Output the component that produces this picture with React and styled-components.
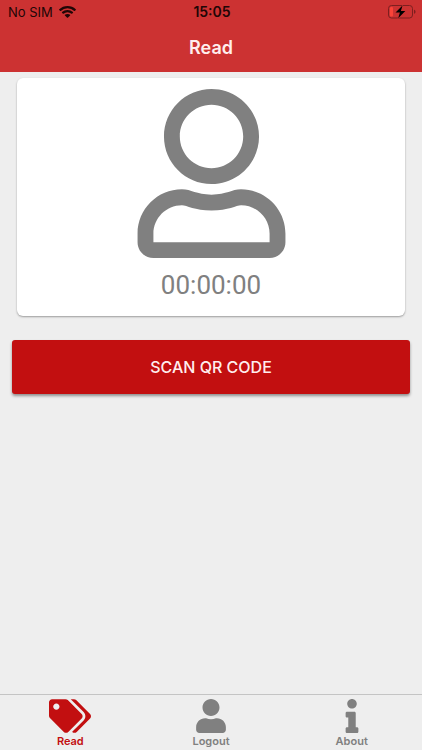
import React, { useState } from 'react';
import styled, { createGlobalStyle } from 'styled-components';
import { FaRegUser, FaTags, FaUser, FaInfo } from 'react-icons/fa';

const GlobalStyle = createGlobalStyle`
    * {
        box-sizing: border-box;
    }

    body {
        margin: 0;
        background: #eeeeee;
        font-family: Inter, Roboto, sans-serif;
    }
`;

const Screen = styled.div`
    min-height: 100vh;
    display: flex;
    flex-direction: column;
`;

const Header = styled.header`
    background: #cc3232;
`;

const StatusBar = styled.div`
    height: 24px;
    padding: 0 6px 0 8px;
    display: grid;
    grid-template-columns: 1fr auto 1fr;
    align-items: center;
    font-size: 13px;
    line-height: 24px;
    color: #210606;
`;

const Carrier = styled.div`
    display: flex;
    align-items: center;
    gap: 6px;
`;

const Time = styled.span`
    font-size: 14px;
    font-weight: 600;
`;

const BatteryIcon = styled.svg`
    justify-self: end;
`;

const Title = styled.h1`
    margin: 0;
    height: 48px;
    font-size: 18px;
    line-height: 48px;
    font-weight: 600;
    text-align: center;
    color: #ffeeee;
`;

const Content = styled.main`
    flex: 1;
    padding: 6px 12px;
    display: flex;
    flex-direction: column;
    gap: 24px;
`;

const Card = styled.section`
    margin: 0 5px;
    padding: 11px 0 16px;
    display: flex;
    flex-direction: column;
    align-items: center;
    gap: 12px;
    background: #ffffff;
    border-radius: 6px;
    box-shadow: 0 1px 2px rgba(0, 0, 0, 0.35);
    color: #808080;
`;

const Avatar = styled(FaRegUser)`
    width: auto;
    height: 169px;
`;

const Timer = styled.time`
    font-family: Roboto, sans-serif;
    font-size: 26px;
    line-height: 30px;
`;

const ScanButton = styled.button`
    height: 54px;
    border: 0;
    border-radius: 3px;
    background: #c20f10;
    box-shadow: 0 2px 3px rgba(0, 0, 0, 0.4);
    color: #ffeeee;
    font-family: inherit;
    font-size: 16px;
    font-weight: 500;
    text-transform: uppercase;
    cursor: pointer;
`;

const TabBar = styled.nav`
    height: 56px;
    display: flex;
    border-top: 1px solid #c4c4c4;
`;

const Tab = styled.a`
    flex: 1;
    padding-top: 4px;
    display: flex;
    flex-direction: column;
    align-items: center;
    gap: 1px;
    font-size: 11px;
    line-height: 14px;
    font-weight: 600;
    color: ${props => (props.$active ? '#c20f10' : '#808080')};
    text-decoration: none;

    svg {
        width: 42px;
        height: 34px;
    }
`;

const tabs = [
  { name: 'Read', icon: FaTags },
  { name: 'Logout', icon: FaUser },
  { name: 'About', icon: FaInfo }
];

const Wifi = () => (
  <svg width="17" height="12" viewBox="0 0 17 12" fill="currentColor" aria-hidden="true">
    <path d="M8.5 0C5.3 0 2.4 1.2.2 3.3c-.2.2-.2.4 0 .6l1 1c.2.2.4.2.6 0a9.8 9.8 0 0 1 13.4 0c.2.2.4.2.6 0l1-1c.2-.2.2-.4 0-.6A12 12 0 0 0 8.5 0Z" />
    <path d="M8.5 4c-2.1 0-4 .8-5.5 2.1-.2.2-.2.4 0 .6l1 1c.2.2.4.2.6 0a5.8 5.8 0 0 1 7.8 0c.2.2.4.2.6 0l1-1c.2-.2.2-.4 0-.6A8.2 8.2 0 0 0 8.5 4Z" />
    <path d="M8.5 7.9c-1 0-1.9.3-2.6.9-.2.2-.2.4 0 .6l2.300 2.300c.2.2.4.2.6 0l2.300-2.300c.2-.2.2-.4 0-.6a4 4 0 0 0-2.600-.9Z" />
  </svg>
);

const Battery = () => (
  <BatteryIcon width="28" height="14" viewBox="0 0 28 14" aria-hidden="true">
    <rect x="0.5" y="0.5" width="24" height="12.5" rx="3" fill="none" stroke="#7d1f1f" />
    <rect x="2" y="2" width="3" height="9.5" rx="1" fill="#fa4338" />
    <path d="M26 4.8c1 .4 1.5 1.1 1.5 2s-.5 1.6-1.5 2Z" fill="#7d1f1f" />
    <path d="M14.5.5 7.5 7.6h4.4L10.2 13.3 17.3 6h-4.4Z" fill="#000" stroke="#cc3232" strokeWidth="1" paintOrder="stroke" />
  </BatteryIcon>
);

const App = () => {
  const [active, setActive] = useState('Read');

  const selectTab = (e, name) => {
    e.preventDefault();
    setActive(name);
  };

  return (
    <Screen>
      <GlobalStyle />
      <Header>
        <StatusBar>
          <Carrier>No SIM <Wifi /></Carrier>
          <Time>15:05</Time>
          <Battery />
        </StatusBar>
        <Title>Read</Title>
      </Header>
      <Content>
        <Card>
          <Avatar aria-hidden="true" />
          <Timer>00:00:00</Timer>
        </Card>
        <ScanButton type="button">Scan QR Code</ScanButton>
      </Content>
      <TabBar>
        {tabs.map(({ name, icon: Icon }) => (
          <Tab
            key={name}
            href={`#${name.toLowerCase()}`}
            $active={active === name}
            aria-current={active === name ? 'page' : undefined}
            onClick={e => selectTab(e, name)}
          >
            <Icon aria-hidden="true" />
            {name}
          </Tab>
        ))}
      </TabBar>
    </Screen>
  );
};

export default App;
